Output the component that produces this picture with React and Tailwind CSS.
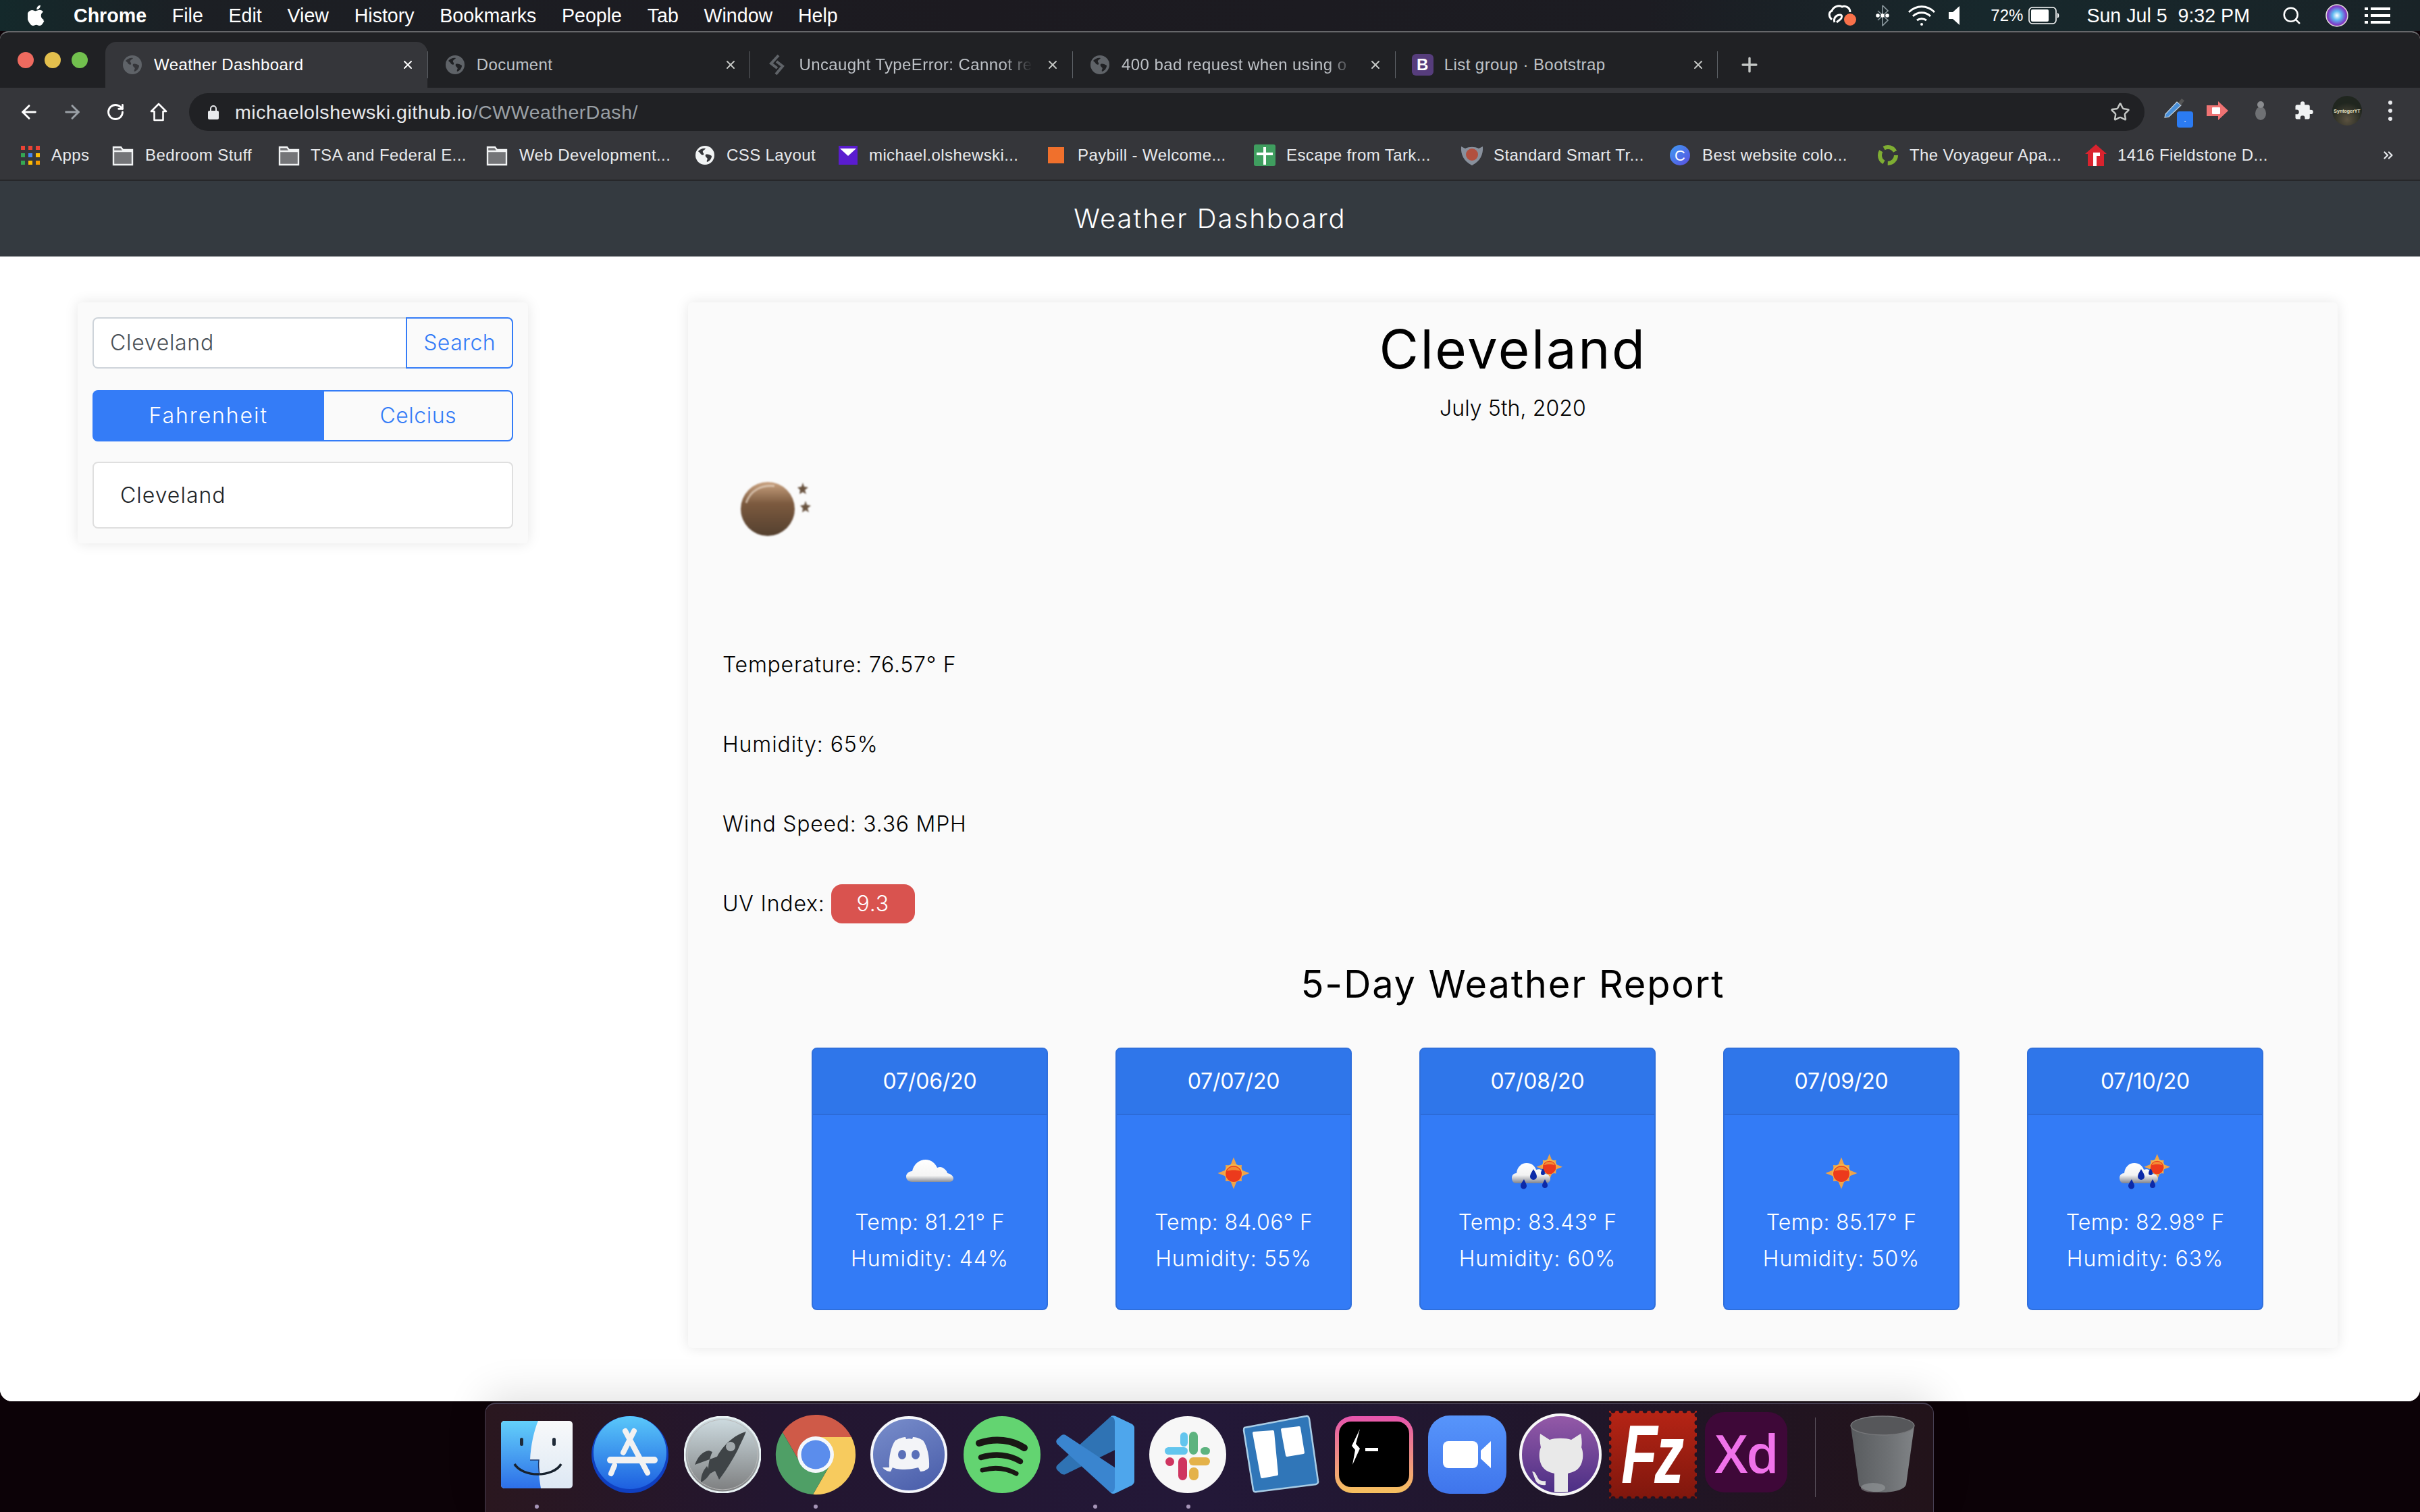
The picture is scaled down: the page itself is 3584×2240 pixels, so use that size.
import React from "react";
import { ArrowLeft, ArrowRight, RotateCw, Star, X, Plus, Search, ChevronsRight } from "lucide-react";

const Globe = ({ dark = "#5f6368", light = "#202124", size = 28 }) => (
  <svg width={size} height={size} viewBox="0 0 28 28" className="shrink-0">
    <circle cx="14" cy="14" r="14" fill={dark} />
    <path d="M4 8c3-3 7-5 11-4-1 2-3 2-4 4s2 3 1 5-4 0-5-2-2-1-3-3zM15 13c3-1 6 0 9 2 0 4-3 8-7 9-1-3 2-4 0-6s-3-3-2-5z" fill={light} />
  </svg>
);

const Folder = () => (
  <svg width="32" height="32" viewBox="0 0 32 32" className="shrink-0">
    <path d="M2 4h11l3 4h14v22H2z" fill="#747578" stroke="#f1f3f4" strokeWidth="2.4" />
    <path d="M2 10h28" stroke="#f1f3f4" strokeWidth="2.4" />
  </svg>
);

const AppsGrid = () => (
  <svg width="28" height="28" viewBox="0 0 28 28" className="shrink-0">
    {[["#ea4335", 0], ["#ea4335", 11], ["#ea4335", 22]].map(([c, x]) => <rect key={x} x={x} y="0" width="6" height="6" fill={c} />)}
    <rect x="0" y="11" width="6" height="6" fill="#34a853" />
    <rect x="11" y="11" width="6" height="6" fill="#4285f4" />
    <rect x="22" y="11" width="6" height="6" fill="#fbbc05" />
    <rect x="0" y="22" width="6" height="6" fill="#34a853" />
    <rect x="11" y="22" width="6" height="6" fill="#fbbc05" />
    <rect x="22" y="22" width="6" height="6" fill="#f29900" />
  </svg>
);

const Bookmark = ({ w, off, icon, text }) => (
  <div className={`flex items-center shrink-0 ${w}`}>
    <div className={`flex items-center shrink-0 ${off}`}>{icon}</div>
    <span className="whitespace-nowrap text-[24px] text-[#e8eaed] tracking-[0.4px]">{text}</span>
  </div>
);

const Tab = ({ active, icon, text, fade }) => (
  <div className={`flex items-center w-[476.7px] h-[68px] pl-[26px] shrink-0 ${active ? "bg-[#35363a] rounded-t-[16px]" : ""}`}>
    <div className="w-[46px] shrink-0 flex items-center">{icon}</div>
    <div className={`w-[346px] overflow-hidden whitespace-nowrap text-[24px] tracking-[0.42px] ${active ? "text-white" : "text-[#bdc1c6]"} ${fade ? "[mask-image:linear-gradient(90deg,#000_88%,transparent)]" : ""}`}>{text}</div>
    <div className="w-[20px] ml-[20px] shrink-0 flex justify-center">
      <X size={24} strokeWidth={2.4} color={active ? "#ffffff" : "#c4c7c5"} />
    </div>
  </div>
);

const Sep = () => <div className="w-px h-[40px] bg-[#5f6368] shrink-0" />;

const MenuItem = ({ children, bold }) => (
  <span className={`text-[28.6px] text-white whitespace-nowrap ${bold ? "font-bold" : ""}`}>{children}</span>
);

const Cloud = () => (
  <svg width="72" height="44" viewBox="0 0 72 44" className="mb-[6px]">
    <defs>
      <linearGradient id="cl" x1="0" y1="0" x2="0" y2="1">
        <stop offset="0" stopColor="#ffffff" />
        <stop offset="0.72" stopColor="#f4f4f4" />
        <stop offset="1" stopColor="#8b8f98" />
      </linearGradient>
    </defs>
    <path d="M10 38c-6 0-9-4-9-8s4-8 9-8c2-10 10-17 20-17 8 0 14 5 17 12 4-2 8-1 11 2 3 2 4 5 4 6 5 1 9 4 9 8 0 3-3 5-7 5z" fill="url(#cl)" />
  </svg>
);

const starPoints = Array.from({ length: 16 }, (_, i) => {
  const a = (i * Math.PI) / 8;
  const r = i % 4 === 0 ? 23.5 : i % 2 === 0 ? 17 : 12.5;
  return `${(24 + r * Math.sin(a)).toFixed(1)},${(24 - r * Math.cos(a)).toFixed(1)}`;
}).join(" ");

const SunInner = () => (
  <g>
    <polygon points={starPoints} fill="#eea34a" />
    <circle cx="24" cy="24" r="13.500" fill="#f5b64a" />
    <circle cx="24" cy="25" r="12" fill="#ec3a1c" />
    <path d="M14 21a11 11 0 0 1 20 0c-6-2-14-2-20 0z" fill="#f49a38" opacity="0.85" />
  </g>
);

const SunGlyph = () => (
  <svg width="48" height="48" viewBox="0 0 48 48">
    <SunInner />
  </svg>
);

const Storm = () => (
  <svg width="76" height="58" viewBox="0 0 76 58">
    <defs>
      <linearGradient id="st" x1="0" y1="0" x2="0" y2="1">
        <stop offset="0" stopColor="#ffffff" />
        <stop offset="0.6" stopColor="#f2f2f2" />
        <stop offset="1" stopColor="#7f838e" />
      </linearGradient>
    </defs>
    <g transform="translate(36,0) scale(0.82)"><SunInner /></g>
    <path d="M6 44c-4 0-6-4-6-8s3-7 7-7c1-9 7-15 15-15 7 0 12 4 14 10 3-1 6-1 9 1 2 1 3 3 4 5 5 0 8 4 8 8 0 3-3 6-7 6z" fill="url(#st)" />
    <g fill="#0c2aa8">
      <path d="M32 23c3 5 5 8 5 11a5 5 0 0 1-10 0c0-3 2-6 5-11z" />
      <path d="M18 38c2 5 4 7 4 10a4.500 4.500 0 0 1-9 0c0-3 2-5 5-10z" />
      <path d="M49 38c2 4 4 7 4 9a4 4 0 0 1-8 0c0-2 2-5 4-9z" />
      <path d="M46 22c2 3 3 5 3 7a3 3 0 0 1-6 0c0-2 1-4 3-7z" />
    </g>
  </svg>
);

const Moon = () => (
  <svg width="104" height="82" viewBox="0 0 104 82" className="blur-[1px]">
    <defs>
      <linearGradient id="mn" x1="0" y1="0" x2="0" y2="1">
        <stop offset="0" stopColor="#c9a280" />
        <stop offset="0.4" stopColor="#7c5a3f" />
        <stop offset="1" stopColor="#54402f" />
      </linearGradient>
    </defs>
    <circle cx="40" cy="41" r="40" fill="url(#mn)" />
    <path d="M8 32C14 14 30 5 50 7" fill="none" stroke="#e7d6c4" strokeWidth="3" opacity="0.7" />
    <path d="M92 2l2 6 6 1-5 4 2 6-5-3-5 3 1-6-4-4 6-1z" fill="#6a5440" />
    <path d="M96 29l2 6 6 1-5 4 2 6-5-3-5 3 1-6-4-4 6-1z" fill="#6a5440" />
  </svg>
);

const ForecastCard = ({ date, icon, temp, hum }) => (
  <div className="w-[350px] h-[389px] shrink-0 rounded-[8px] bg-[#337bf6] border-2 border-[#2f6fdc] flex flex-col text-white overflow-hidden">
    <div className="h-[98px] flex items-center justify-center bg-[#2f76ea] border-b-2 border-[#2c6bd8] text-[32px] tracking-[-0.2px] shrink-0">{date}</div>
    <div className="flex flex-col items-center">
      <div className="h-[72px] mt-[50px] mb-[10px] flex items-center justify-center">{icon}</div>
      <div className="h-[54px] leading-[54px] text-[32px] tracking-[0.3px] font-[350]">{temp}</div>
      <div className="h-[54px] leading-[54px] text-[32px] tracking-[1px] font-[350]">{hum}</div>
    </div>
  </div>
);

const Cell = ({ children, dot }) => (
  <div className="relative w-[137.8px] h-[120px] shrink-0 flex items-center justify-center">
    {children}
    {dot && <div className="absolute left-[66px] top-[134px] w-[6px] h-[6px] rounded-full bg-[#a695b8]" />}
  </div>
);

const Finder = () => (
  <svg width="108" height="100" viewBox="0 0 108 100">
    <defs>
      <linearGradient id="f1" x1="0" y1="0" x2="0" y2="1"><stop offset="0" stopColor="#63d0fa" /><stop offset="1" stopColor="#2d6fe8" /></linearGradient>
      <linearGradient id="f2" x1="0" y1="0" x2="0" y2="1"><stop offset="0" stopColor="#f8f9fa" /><stop offset="1" stopColor="#dde8f4" /></linearGradient>
    </defs>
    <rect x="1" y="0" width="106" height="100" rx="5" fill="url(#f2)" />
    <path d="M6 0h50C50 14 45 36 44 58h13c-1 14 1 30 3 42H6a5 5 0 0 1-5-5V5a5 5 0 0 1 5-5z" fill="url(#f1)" />
    <rect x="29" y="25" width="5" height="12" rx="2.500" fill="#1f2a38" />
    <rect x="77" y="25" width="5" height="12" rx="2.500" fill="#1f2a38" />
    <path d="M21 64c12 20 57 20 69 0" fill="none" stroke="#18222e" strokeWidth="3.500" />
    <path d="M44 58h13c-1 8 0 16 1 22" fill="none" stroke="#1c3a70" strokeWidth="1.500" />
  </svg>
);

const AppStore = () => (
  <svg width="114" height="114" viewBox="0 0 114 114">
    <defs>
      <linearGradient id="as" x1="0" y1="0" x2="0" y2="1"><stop offset="0" stopColor="#5ac8fa" /><stop offset="1" stopColor="#1d5fe0" /></linearGradient>
    </defs>
    <circle cx="57" cy="57" r="57" fill="#0f3fc0" />
    <circle cx="57" cy="54" r="54" fill="url(#as)" />
    <g stroke="#f2f2f2" strokeLinecap="round" fill="none">
      <path d="M50 22l33 62" strokeWidth="8" />
      <path d="M63 22L47 54" strokeWidth="8" />
      <path d="M28 65h65" strokeWidth="10" />
      <path d="M34 73l-5 12" strokeWidth="8" />
    </g>
  </svg>
);

const Rocket = () => (
  <svg width="114" height="114" viewBox="0 0 114 114">
    <defs>
      <linearGradient id="rk" x1="0" y1="0" x2="0" y2="1"><stop offset="0" stopColor="#cfdde2" /><stop offset="1" stopColor="#7c7d7e" /></linearGradient>
    </defs>
    <circle cx="57" cy="57" r="56" fill="url(#rk)" stroke="#e8f1f3" strokeWidth="3" />
    <circle cx="57" cy="57" r="52" fill="none" stroke="#b9b9b9" strokeWidth="1" />
    <path d="M92 23C74 28 58 43 49 60L16 72c4-11 11-20 21-21l5 2c-6 13-7 25-5 33l9-5 6 13c8-10 22-32 29-47 5-11 9-18 11-25z" fill="#3f4447" />
    <path d="M34 74c-6 7-9 14-9 24 6-3 11-8 14-14z" fill="#3f4447" />
    <ellipse cx="69" cy="45" rx="7" ry="7" fill="#a2a9ac" />
  </svg>
);

const ChromeIcon = () => (
  <svg width="120" height="120" viewBox="0 0 120 120">
    <path d="M11 27A59 59 0 0 1 113 34L60 34A26 26 0 0 0 37.500 73Z" fill="#cf5a48" />
    <path d="M113 34A59 59 0 0 1 56 119L82.500 73A26 26 0 0 0 60 34Z" fill="#f7cb5e" />
    <path d="M56 119A59 59 0 0 1 11 27L37.500 73A26 26 0 0 0 82.500 73Z" fill="#4f9f66" />
    <circle cx="60" cy="60" r="27" fill="#f4f7fb" />
    <circle cx="60" cy="60" r="21.500" fill="#5b8dec" />
  </svg>
);

const Discord = () => (
  <svg width="114" height="114" viewBox="0 0 114 114">
    <defs>
      <linearGradient id="dc" x1="0" y1="0" x2="0.5" y2="1"><stop offset="0" stopColor="#7a8fcc" /><stop offset="1" stopColor="#4f63ae" /></linearGradient>
    </defs>
    <circle cx="57" cy="57" r="55" fill="url(#dc)" stroke="#f4f6fb" strokeWidth="4" />
    <path d="M28 76c-1-16 3-32 9-40 7-4 13-5 15-5l1 3c3-1 6-1 9 0l1-3c3 0 9 1 15 5 6 8 10 24 9 40-4 5-10 6-13 6l-3-6c-1 0-9 3-20 3s-16-2-18-3l-3 6c-3 0-8-1-12-6z" fill="#f3f4f8" />
    <ellipse cx="47" cy="57" rx="6" ry="7" fill="#5a6fb8" />
    <ellipse cx="67" cy="57" rx="6" ry="7" fill="#5a6fb8" />
  </svg>
);

const Spotify = () => (
  <svg width="116" height="116" viewBox="0 0 116 116">
    <circle cx="58" cy="58" r="57" fill="#63d471" />
    <g fill="none" stroke="#191714" strokeLinecap="round">
      <path d="M24 41c24-8 49-5 67 7" strokeWidth="10" />
      <path d="M27 62c21-6 42-4 58 6" strokeWidth="8.500" />
      <path d="M29 81c18-5 35-3 50 5" strokeWidth="7" />
    </g>
  </svg>
);

const VSCode = () => (
  <svg width="116" height="116" viewBox="0 0 100 100">
    <path d="M75 1L96.500 10.800Q100 13 100 16.400V32L12 75Q10 76 7 74.800L1.400 69.700Q-1 66.500 1.400 63.600L69 2Q72 0 75 1Z" fill="#2f73b4" />
    <path d="M96.500 89.200L75.900 99.100Q72 100.500 69 98L1.400 36.400Q-1 33 1.400 30.300L7 25.200Q10 23.500 12.200 25L100 83Q99 87.500 96.500 89.200Z" fill="#3a85cf" />
    <path d="M69.500 1.400Q72.500 -0.500 75.900 0.900L96.500 10.800Q100 13 100 16.400V83.600Q100 87 96.500 89.200L75.900 99.100Q72.500 100.500 69.500 98.600Q75 98 75 92V8Q75 2 69.500 1.400Z" fill="#4ea6ec" />
  </svg>
);

const Slack = () => (
  <svg width="116" height="116" viewBox="0 0 116 116">
    <circle cx="58" cy="58" r="57" fill="#f7f7f7" />
    <rect x="47" y="25" width="11" height="21" rx="5.500" fill="#63c5ee" />
    <rect x="24" y="47" width="34" height="11" rx="5.500" fill="#63c5ee" />
    <rect x="60" y="24" width="13" height="34" rx="6.500" fill="#5db37f" />
    <rect x="77" y="47" width="14" height="11" rx="5.500" fill="#5db37f" />
    <rect x="25" y="62" width="13" height="13" rx="6.500" fill="#cf3560" />
    <rect x="44" y="62" width="13" height="34" rx="6.500" fill="#cf3560" />
    <rect x="60" y="62" width="31" height="12" rx="6" fill="#e4b24a" />
    <rect x="60" y="77" width="14" height="19" rx="6.500" fill="#e4b24a" />
  </svg>
);

const Trello = () => (
  <svg width="118" height="118" viewBox="0 0 118 118">
    <path d="M5 19L96 2Q100 1 101 6L114 98Q115 101 111 103L23 114Q19 115 18 111L4 23Q4 20 5 19Z" fill="#3076b8" stroke="#a9cde6" strokeWidth="2.500" strokeLinejoin="round" />
    <path d="M19 27L47 25L53 88L31 92Z" fill="#ffffff" stroke="#ffffff" strokeWidth="4" strokeLinejoin="round" />
    <path d="M61 22L86 19L92 56L68 60Z" fill="#ffffff" stroke="#ffffff" strokeWidth="4" strokeLinejoin="round" />
  </svg>
);

const Hyper = () => (
  <svg width="118" height="116" viewBox="0 0 118 116">
    <defs>
      <linearGradient id="hy" x1="0" y1="0" x2="0" y2="1"><stop offset="0" stopColor="#e654ad" /><stop offset="1" stopColor="#f6c15e" /></linearGradient>
    </defs>
    <rect x="1" y="1" width="116" height="114" rx="26" fill="url(#hy)" />
    <rect x="7" y="9" width="104" height="97" rx="18" fill="#000000" />
    <path d="M38 20l-6 22 6 7-11 24 4-22-5-6z" fill="#ffffff" />
    <rect x="46" y="48" width="19" height="5" fill="#ffffff" />
  </svg>
);

const ZoomIcon = () => (
  <svg width="116" height="116" viewBox="0 0 116 116">
    <defs>
      <linearGradient id="zm" x1="0" y1="0" x2="0" y2="1"><stop offset="0" stopColor="#5795fb" /><stop offset="1" stopColor="#3f75ec" /></linearGradient>
    </defs>
    <rect width="116" height="116" rx="32" fill="url(#zm)" />
    <rect x="22" y="38" width="52" height="40" rx="8" fill="#ffffff" />
    <path d="M78 52l15-14v40L78 64z" fill="#ffffff" />
  </svg>
);

const GitHubIcon = () => (
  <svg width="122" height="122" viewBox="0 0 122 122">
    <defs>
      <linearGradient id="gh" x1="0" y1="0" x2="0" y2="1"><stop offset="0" stopColor="#955aa8" /><stop offset="1" stopColor="#4a2e84" /></linearGradient>
      <clipPath id="ghc"><circle cx="61" cy="61" r="56" /></clipPath>
    </defs>
    <circle cx="61" cy="61" r="59" fill="url(#gh)" stroke="#f7f7f7" strokeWidth="4" />
    <g clipPath="url(#ghc)" fill="#e9e9e9">
      <path d="M31 30l14 9c8-3 24-3 32 0l14-9c2 8 2 16 1 20 4 9 3 24-5 32-4 4-12 6-15 7v34H52V89c-4-1-11-3-15-7-8-8-9-23-5-32-1-4-2-12-1-20z" />
      <path d="M19 86c5 0 6 5 9 10 2 4 7 5 11 4v6c-7 1-13-2-15-7-2-5-3-9-5-13z" />
    </g>
  </svg>
);

const FZ = () => (
  <div className="relative w-[130px] h-[130px] shrink-0">
    <svg width="130" height="130" viewBox="0 0 130 130" className="absolute inset-0">
      <defs>
        <linearGradient id="fzb" x1="0" y1="0" x2="0" y2="1"><stop offset="0" stopColor="#b62415" /><stop offset="1" stopColor="#7f170d" /></linearGradient>
      </defs>
      <rect width="130" height="130" fill="url(#fzb)" />
      <g fill="#211322">
        {[0, 1, 2, 3, 4, 5, 6, 7, 8, 9, 10].map((i) => (
          <g key={i}>
            <circle cx={6 + i * 11.8} cy="0" r="3.500" />
            <circle cx={6 + i * 11.8} cy="130" r="3.500" />
            <circle cx="0" cy={6 + i * 11.8} r="3.500" />
            <circle cx="130" cy={6 + i * 11.8} r="3.500" />
          </g>
        ))}
      </g>
    </svg>
    <span className="absolute left-[18px] top-0 text-[122px] leading-[130px] font-bold italic text-white tracking-[-6px] origin-left scale-x-[0.72] [font-family:'Liberation_Sans',sans-serif]">Fz</span>
  </div>
);

const XD = () => (
  <div className="w-[122px] h-[119px] rounded-[28px] bg-[#3e0838] flex items-center justify-center mb-[7px] shrink-0">
    <span className="text-[78px] leading-none text-[#f072ea] font-semibold tracking-[-2px] [font-family:'Open_Sans',sans-serif]">Xd</span>
  </div>
);

const Trash = () => (
  <svg width="96" height="116" viewBox="0 0 96 116">
    <defs>
      <linearGradient id="tr" x1="0" y1="0" x2="1" y2="0"><stop offset="0" stopColor="#585b5e" /><stop offset="0.6" stopColor="#6e7174" /><stop offset="1" stopColor="#808386" /></linearGradient>
    </defs>
    <path d="M1 16L13 102C17 118 79 118 83 102L95 16z" fill="url(#tr)" />
    <ellipse cx="48" cy="15" rx="47" ry="14" fill="#56575a" stroke="#77787b" strokeWidth="1.500" />
    <ellipse cx="34" cy="107" rx="18" ry="7" fill="#a0a3a5" opacity="0.5" />
  </svg>
);

export default function App() {
  return (
    <div className="relative w-[3584px] h-[2240px] overflow-hidden bg-[#0c0207] flex flex-col [font-family:'Liberation_Sans',sans-serif]">
      {/* macOS menu bar */}
      <div className="h-[46px] shrink-0 flex items-center bg-[linear-gradient(90deg,#14292b_0%,#1c1f24_8%,#1c1a20_40%,#1c1c22_68%,#17282c_82%,#192327_100%)]">
        <svg width="28" height="32" viewBox="0 0 170 200" className="ml-[41px] mr-[40px] shrink-0" fill="#fff">
          <path d="M150 150c-3 8-7 15-11 21-6 8-10 14-14 16-5 5-11 7-17 7-4 0-9-1-15-4-6-2-11-4-16-4s-10 2-16 4c-6 3-11 4-15 4-6 0-12-2-18-8-4-3-9-9-14-17-6-8-11-18-15-29-4-12-6-24-6-35 0-13 3-24 8-33 5-7 10-12 17-16s14-6 22-6c4 0 10 1 17 4s12 4 14 4 7-2 16-5c8-3 15-4 20-4 15 1 27 7 34 18-13 8-20 20-20 34 0 11 4 21 12 28 4 3 8 6 12 8-1 3-2 6-3 8zM116 7c0 8-3 16-9 24-8 9-17 14-27 13v-3c0-8 3-16 9-24 3-3 7-6 12-9 5-2 9-4 13-4 1 1 2 2 2 3z" />
        </svg>
        <div className="flex items-center gap-[37.7px]">
          <MenuItem bold>Chrome</MenuItem>
          <MenuItem>File</MenuItem>
          <MenuItem>Edit</MenuItem>
          <MenuItem>View</MenuItem>
          <MenuItem>History</MenuItem>
          <MenuItem>Bookmarks</MenuItem>
          <MenuItem>People</MenuItem>
          <MenuItem>Tab</MenuItem>
          <MenuItem>Window</MenuItem>
          <MenuItem>Help</MenuItem>
        </div>
        <div className="ml-auto flex items-center pr-[44px]">
          <svg width="42" height="32" viewBox="0 0 42 32" className="shrink-0">
            <path d="M6 22c-5-4-5-11 0-13 2-6 10-9 15-6 5-2 12 1 12 8" fill="none" stroke="#fff" strokeWidth="3" />
            <path d="M10 26c-2-6 2-11 8-11 4 0 3 5 0 7l-5 4" fill="none" stroke="#fff" strokeWidth="3" />
            <circle cx="33" cy="22" r="9" fill="#f9714a" />
          </svg>
          <svg width="24" height="32" viewBox="0 0 24 32" className="ml-[27px] shrink-0">
            <path d="M12 1v30l8-8L5 9M12 1l8 8L5 23" fill="none" stroke="#8d9aa0" strokeWidth="1.600" />
            <circle cx="5" cy="16" r="2.800" fill="#fff" /><circle cx="12" cy="16" r="2.800" fill="#fff" /><circle cx="19" cy="16" r="2.800" fill="#fff" />
          </svg>
          <svg width="40" height="32" viewBox="0 0 40 32" className="ml-[26px] shrink-0" fill="none" stroke="#fff" strokeWidth="3">
            <path d="M1 11c11-11 27-11 38 0M7 17c7-7 19-7 26 0M13 23c4-3 10-3 14 0" />
            <circle cx="20" cy="29" r="2" fill="#fff" stroke="none" />
          </svg>
          <svg width="18" height="28" viewBox="0 0 18 28" className="ml-[20px] shrink-0"><path d="M0 9h6l10-9v28L6 19H0z" fill="#fff" /></svg>
          <span className="ml-[44px] text-[24px] text-white">72%</span>
          <svg width="46" height="26" viewBox="0 0 46 26" className="ml-[8px] shrink-0">
            <rect x="1" y="1" width="40" height="24" rx="5" fill="none" stroke="#fff" strokeWidth="1.600" />
            <rect x="4" y="4" width="26" height="18" rx="2" fill="#fff" />
            <path d="M43 9c3 1 3 7 0 8z" fill="#fff" />
          </svg>
          <span className="ml-[40px] text-[28.6px] text-white whitespace-pre">Sun Jul 5  9:32 PM</span>
          <Search size={30} color="#fff" strokeWidth={2} className="ml-[47px] shrink-0" />
          <svg width="34" height="34" viewBox="0 0 34 34" className="ml-[35px] shrink-0">
            <defs><radialGradient id="si" cx="0.5" cy="0.5" r="0.6"><stop offset="0" stopColor="#fff" /><stop offset="0.35" stopColor="#5fb8f0" /><stop offset="0.7" stopColor="#7a3fc8" /><stop offset="1" stopColor="#d63c8c" /></radialGradient></defs>
            <circle cx="17" cy="17" r="16" fill="url(#si)" stroke="#ddd" strokeWidth="1.500" />
          </svg>
          <svg width="38" height="24" viewBox="0 0 38 24" className="ml-[24px] shrink-0" fill="#fff">
            <rect x="0" y="0" width="5" height="4" /><rect x="9" y="0" width="29" height="4" />
            <rect x="0" y="10" width="5" height="4" /><rect x="9" y="10" width="29" height="4" />
            <rect x="0" y="20" width="5" height="4" /><rect x="9" y="20" width="29" height="4" />
          </svg>
        </div>
      </div>

      {/* Browser window */}
      <div className="h-[2030px] shrink-0 flex flex-col rounded-t-[12px] rounded-b-[18px] overflow-hidden bg-white border-t-2 border-[#66676a]">
        {/* Tab strip */}
        <div className="h-[82px] shrink-0 bg-[#202124] flex items-end">
          <div className="w-[156px] h-[82px] shrink-0 flex items-center pl-[26px] gap-[16px]">
            <div className="w-[24px] h-[24px] rounded-full bg-[#ee6a5f]" />
            <div className="w-[24px] h-[24px] rounded-full bg-[#e3bf4d]" />
            <div className="w-[24px] h-[24px] rounded-full bg-[#72c04e]" />
          </div>
          <div className="flex items-center h-[68px]">
            <Tab active icon={<Globe light="#35363a" />} text="Weather Dashboard" />
            <Sep />
            <Tab icon={<Globe light="#202124" />} text="Document" />
            <Sep />
            <Tab
              fade
              icon={
                <svg width="28" height="32" viewBox="0 0 28 32" fill="none" stroke="#5f6368" strokeWidth="4">
                  <path d="M16 2L5 14l9 7M13 11l9 7-10 12" />
                </svg>
              }
              text="Uncaught TypeError: Cannot re"
            />
            <Sep />
            <Tab fade icon={<Globe light="#202124" />} text="400 bad request when using o" />
            <Sep />
            <Tab
              icon={
                <div className="w-[32px] h-[32px] ml-[-2px] rounded-[6px] bg-[#563d7c] flex items-center justify-center text-white text-[24px] font-bold">B</div>
              }
              text="List group · Bootstrap"
            />
            <Sep />
            <Plus size={34} color="#c4c7c5" strokeWidth={2.4} className="ml-[30px] shrink-0" />
          </div>
        </div>

        {/* Toolbar */}
        <div className="h-[64px] shrink-0 bg-[#35363a] flex items-end">
          <div className="flex items-center h-[56px] pl-[11px]">
            <div className="w-[64px] flex justify-center"><ArrowLeft size={32} color="#fff" strokeWidth={2.2} /></div>
            <div className="w-[64px] flex justify-center"><ArrowRight size={32} color="#9aa0a6" strokeWidth={2.2} /></div>
            <div className="w-[64px] flex justify-center"><RotateCw size={28} color="#fff" strokeWidth={2.4} /></div>
            <div className="w-[64px] flex justify-center">
              <svg width="28" height="28" viewBox="0 0 28 28" fill="none" stroke="#fff" strokeWidth="2.600" strokeLinejoin="round">
                <path d="M14 2L3 13h4.500v13h13V13H25z" />
              </svg>
            </div>
          </div>
          <div className="ml-[13px] w-[2896px] h-[56px] rounded-full bg-[#202124] flex items-center pl-[28px] pr-[21px]">
            <svg width="16" height="22" viewBox="0 0 16 22" className="shrink-0">
              <path d="M4 9V6a4 4 0 0 1 8 0v3" fill="none" stroke="#e8eaed" strokeWidth="2" />
              <rect x="0" y="9" width="16" height="13" rx="2" fill="#e8eaed" />
            </svg>
            <span className="ml-[24px] text-[28.5px] whitespace-nowrap text-[#e8eaed] tracking-[0.55px]">
              michaelolshewski.github.io<span className="text-[#9aa0a6]">/CWWeatherDash/</span>
            </span>
            <Star size={30} color="#c4c7c5" strokeWidth={2} className="ml-auto shrink-0" />
          </div>
          <div className="ml-[12px] flex items-center h-[56px] mb-[2px]">
            <div className="relative w-[64px] flex justify-center">
              <svg width="34" height="30" viewBox="0 0 34 30" className="mb-[8px]">
                <path d="M3 29l1-5L21 6l6 5L9 28z" fill="#4a90d9" stroke="#c8d6e2" strokeWidth="1.200" />
                <path d="M23 7l5-6 4 3-5 7z" fill="#555" />
              </svg>
              <div className="absolute left-[36px] top-[20px] w-[24px] h-[24px] rounded-[4px] bg-[#2b7bf2] flex items-center justify-center text-white text-[12px] leading-none">.</div>
            </div>
            <div className="w-[64px] flex justify-center">
              <svg width="32" height="28" viewBox="0 0 32 28"><path d="M0 6h17V0l15 14-15 14v-6H0z" fill="#ef7373" /><rect x="8" y="9" width="12" height="10" rx="1" fill="#fff" /></svg>
            </div>
            <div className="w-[64px] flex justify-center">
              <svg width="24" height="28" viewBox="0 0 24 28">
                <ellipse cx="12" cy="18" rx="8" ry="10" fill="#6f7174" />
                <ellipse cx="12" cy="5" rx="5" ry="5" fill="#8a8c8f" />
              </svg>
            </div>
            <div className="w-[64px] flex justify-center">
              <svg width="30" height="32" viewBox="0 0 24 24" fill="#f1f3f4">
                <path d="M20.500 11H19V7a2 2 0 0 0-2-2h-4V3.500a2.500 2.500 0 0 0-5 0V5H4a2 2 0 0 0-2 2v3.800h1.500a2.700 2.700 0 0 1 0 5.400H2V20a2 2 0 0 0 2 2h3.800v-1.500a2.700 2.700 0 0 1 5.400 0V22H17a2 2 0 0 0 2-2v-4h1.500a2.500 2.500 0 0 0 0-5z" />
              </svg>
            </div>
            <div className="w-[64px] flex justify-center">
              <div className="w-[44px] h-[44px] rounded-full bg-[radial-gradient(circle_at_50%_80%,#5b5240,#20261f_60%)] flex items-center justify-center">
                <span className="text-[7px] leading-none text-[#e8e4c8] font-bold whitespace-nowrap">SyntogerYT</span>
              </div>
            </div>
            <div className="w-[64px] flex flex-col items-center gap-[6px]">
              <div className="w-[6px] h-[6px] rounded-full bg-[#e8eaed]" />
              <div className="w-[6px] h-[6px] rounded-full bg-[#e8eaed]" />
              <div className="w-[6px] h-[6px] rounded-full bg-[#e8eaed]" />
            </div>
          </div>
        </div>

        {/* Bookmarks */}
        <div className="h-[74px] shrink-0 bg-[#35363a] border-b-2 border-[#26272a] flex items-center pl-[31px]">
          <Bookmark w="w-[135px]" off="w-[45px]" icon={<AppsGrid />} text="Apps" />
          <Bookmark w="w-[246px]" off="w-[49px]" icon={<Folder />} text="Bedroom Stuff" />
          <Bookmark w="w-[308px]" off="w-[48px]" icon={<Folder />} text="TSA and Federal E..." />
          <Bookmark w="w-[310px]" off="w-[49px]" icon={<Folder />} text="Web Development..." />
          <Bookmark w="w-[212px]" off="w-[46px]" icon={<Globe dark="#f1f3f4" light="#35363a" />} text="CSS Layout" />
          <Bookmark
            w="w-[310px]"
            off="w-[45px]"
            icon={
              <svg width="28" height="28" viewBox="0 0 28 28" className="shrink-0">
                <rect width="28" height="28" fill="#5a1ccf" />
                <path d="M2 4h24L14 15z" fill="#fff" />
              </svg>
            }
            text="michael.olshewski..."
          />
          <Bookmark w="w-[305px]" off="w-[44px]" icon={<div className="w-[24px] h-[24px] bg-[#f0702c]" />} text="Paybill - Welcome..." />
          <Bookmark
            w="w-[306px]"
            off="w-[48px]"
            icon={
              <svg width="32" height="32" viewBox="0 0 32 32" className="shrink-0">
                <rect width="32" height="32" rx="3" fill="#3f9e5f" />
                <path d="M14 4h4v8h10v4H18v14h-4V16H4v-4h10z" fill="#fff" />
              </svg>
            }
            text="Escape from Tark..."
          />
          <Bookmark
            w="w-[310px]"
            off="w-[49px]"
            icon={
              <svg width="34" height="30" viewBox="0 0 34 30" className="shrink-0">
                <path d="M1 2l6 3c6-3 14-3 20 0l6-3c1 12-4 22-16 28C5 24 0 14 1 2z" fill="#88909c" />
                <ellipse cx="17" cy="14" rx="9" ry="9" fill="#b2503f" />
              </svg>
            }
            text="Standard Smart Tr..."
          />
          <Bookmark
            w="w-[307px]"
            off="w-[48px]"
            icon={<div className="w-[30px] h-[30px] rounded-full bg-[linear-gradient(135deg,#3f9bf2,#5a4ee0)] text-white text-[22px] flex items-center justify-center">C</div>}
            text="Best website colo..."
          />
          <Bookmark
            w="w-[308px]"
            off="w-[48px]"
            icon={
              <svg width="32" height="32" viewBox="0 0 32 32" className="shrink-0" fill="none" stroke="#7fae33" strokeWidth="6" strokeDasharray="19 6">
                <circle cx="16" cy="16" r="12" />
              </svg>
            }
            text="The Voyageur Apa..."
          />
          <Bookmark
            w="w-[268px]"
            off="w-[48px]"
            icon={
              <svg width="32" height="32" viewBox="0 0 32 32" className="shrink-0">
                <path d="M16 0l16 14h-4v18H4V14H0z" fill="#d9232e" />
                <path d="M12 12h10v5h-5v15h-5z" fill="#fff" />
              </svg>
            }
            text="1416 Fieldstone D..."
          />
          <ChevronsRight size={22} color="#e8eaed" strokeWidth={2.4} className="ml-[170px] shrink-0" />
        </div>

        {/* Navbar */}
        <div className="h-[112px] shrink-0 bg-[#343a40] flex items-center justify-center text-[40px] font-[350] text-white tracking-[2px] [font-family:Inter,sans-serif]">
          Weather Dashboard
        </div>

        {/* Page */}
        <div className="flex-1 bg-white flex items-start pl-[115px] pt-[68px] [font-family:Inter,sans-serif] text-black">
          {/* Left panel */}
          <div className="w-[667px] h-[357px] shrink-0 bg-[#fafafa] rounded-[6px] shadow-[0_0_20px_rgba(0,0,0,0.1)] px-[22px] pt-[22px]">
            <div className="flex h-[76px]">
              <div className="w-[465px] bg-white border-2 border-r-0 border-[#ced4da] rounded-l-[8px] flex items-center pl-[24px] text-[32px] font-[350] text-[#495057] tracking-[0.7px]">Cleveland</div>
              <div className="w-[159px] border-2 border-[#347cf7] rounded-r-[8px] flex items-center justify-center text-[32px] font-[350] text-[#347cf7] tracking-[0.4px]">Search</div>
            </div>
            <div className="flex h-[76px] mt-[32px]">
              <div className="w-[344px] bg-[#347cf7] rounded-l-[8px] flex items-center justify-center text-[32px] font-[350] text-white tracking-[1.9px]">Fahrenheit</div>
              <div className="w-[280px] border-2 border-l-0 border-[#347cf7] rounded-r-[8px] flex items-center justify-center text-[32px] font-[350] text-[#347cf7] tracking-[0.5px]">Celcius</div>
            </div>
            <div className="h-[99px] mt-[30px] bg-white border-2 border-[#dfdfdf] rounded-[8px] flex items-center pl-[39px] text-[32px] font-[350] text-[#212529] tracking-[1px]">Cleveland</div>
          </div>

          {/* Main panel */}
          <div className="ml-[237px] w-[2443px] h-[1549px] shrink-0 bg-[#fafafa] rounded-[6px] shadow-[0_0_20px_rgba(0,0,0,0.1)] pt-[21px] flex flex-col">
            <div className="h-[96px] leading-[96px] text-center text-[80px] font-normal tracking-[2.5px]">Cleveland</div>
            <div className="h-[48px] leading-[48px] mt-[16px] text-center text-[32px] font-[350] tracking-[0.1px]">July 5th, 2020</div>
            <div className="mt-[84px] ml-[78px] h-[82px]"><Moon /></div>
            <div className="mt-[166px] ml-[51px] h-[48px] leading-[48px] text-[32px] font-[350] tracking-[0.75px]">Temperature: 76.57° F</div>
            <div className="mt-[70px] ml-[51px] h-[48px] leading-[48px] text-[32px] font-[350] tracking-[0.9px]">Humidity: 65%</div>
            <div className="mt-[70px] ml-[51px] h-[48px] leading-[48px] text-[32px] font-[350] tracking-[0.75px]">Wind Speed: 3.36 MPH</div>
            <div className="mt-[65px] ml-[51px] h-[58px] flex items-center text-[32px] font-[350] tracking-[0.8px]">
              UV Index:
              <div className="ml-[9px] w-[124px] h-[58px] rounded-[16px] bg-[#d9534f] text-white flex items-center justify-center">9.3</div>
            </div>
            <div className="mt-[56px] h-[68px] leading-[68px] text-center text-[56px] font-normal tracking-[1.8px]">5-Day Weather Report</div>
            <div className="mt-[60px] ml-[183px] flex gap-[100px]">
              <ForecastCard date="07/06/20" icon={<Cloud />} temp="Temp: 81.21° F" hum="Humidity: 44%" />
              <ForecastCard date="07/07/20" icon={<SunGlyph />} temp="Temp: 84.06° F" hum="Humidity: 55%" />
              <ForecastCard date="07/08/20" icon={<Storm />} temp="Temp: 83.43° F" hum="Humidity: 60%" />
              <ForecastCard date="07/09/20" icon={<SunGlyph />} temp="Temp: 85.17° F" hum="Humidity: 50%" />
              <ForecastCard date="07/10/20" icon={<Storm />} temp="Temp: 82.98° F" hum="Humidity: 63%" />
            </div>
          </div>
        </div>
      </div>

      {/* Dock */}
      <div className="relative z-10 mt-[2px] ml-[718px] w-[2146px] h-[162px] shrink-0 rounded-t-[16px] border-t-2 border-x border-[#473f52] bg-[linear-gradient(90deg,#2a171f_0%,#231630_20%,#231838_50%,#20162a_75%,#22131a_100%)] shadow-[0_-12px_60px_rgba(0,0,0,0.12)] flex items-start pl-[7px] pt-[15px]">
        <Cell dot><Finder /></Cell>
        <Cell><AppStore /></Cell>
        <Cell><Rocket /></Cell>
        <Cell dot><ChromeIcon /></Cell>
        <Cell><Discord /></Cell>
        <Cell><Spotify /></Cell>
        <Cell dot><VSCode /></Cell>
        <Cell dot><Slack /></Cell>
        <Cell><Trello /></Cell>
        <Cell><Hyper /></Cell>
        <Cell><ZoomIcon /></Cell>
        <Cell><GitHubIcon /></Cell>
        <Cell><FZ /></Cell>
        <Cell><XD /></Cell>
        <div className="ml-[33px] mt-[5px] w-px h-[118px] bg-[#5d5560] shrink-0" />
        <div className="ml-[30px]"><Cell><Trash /></Cell></div>
      </div>
    </div>
  );
}
